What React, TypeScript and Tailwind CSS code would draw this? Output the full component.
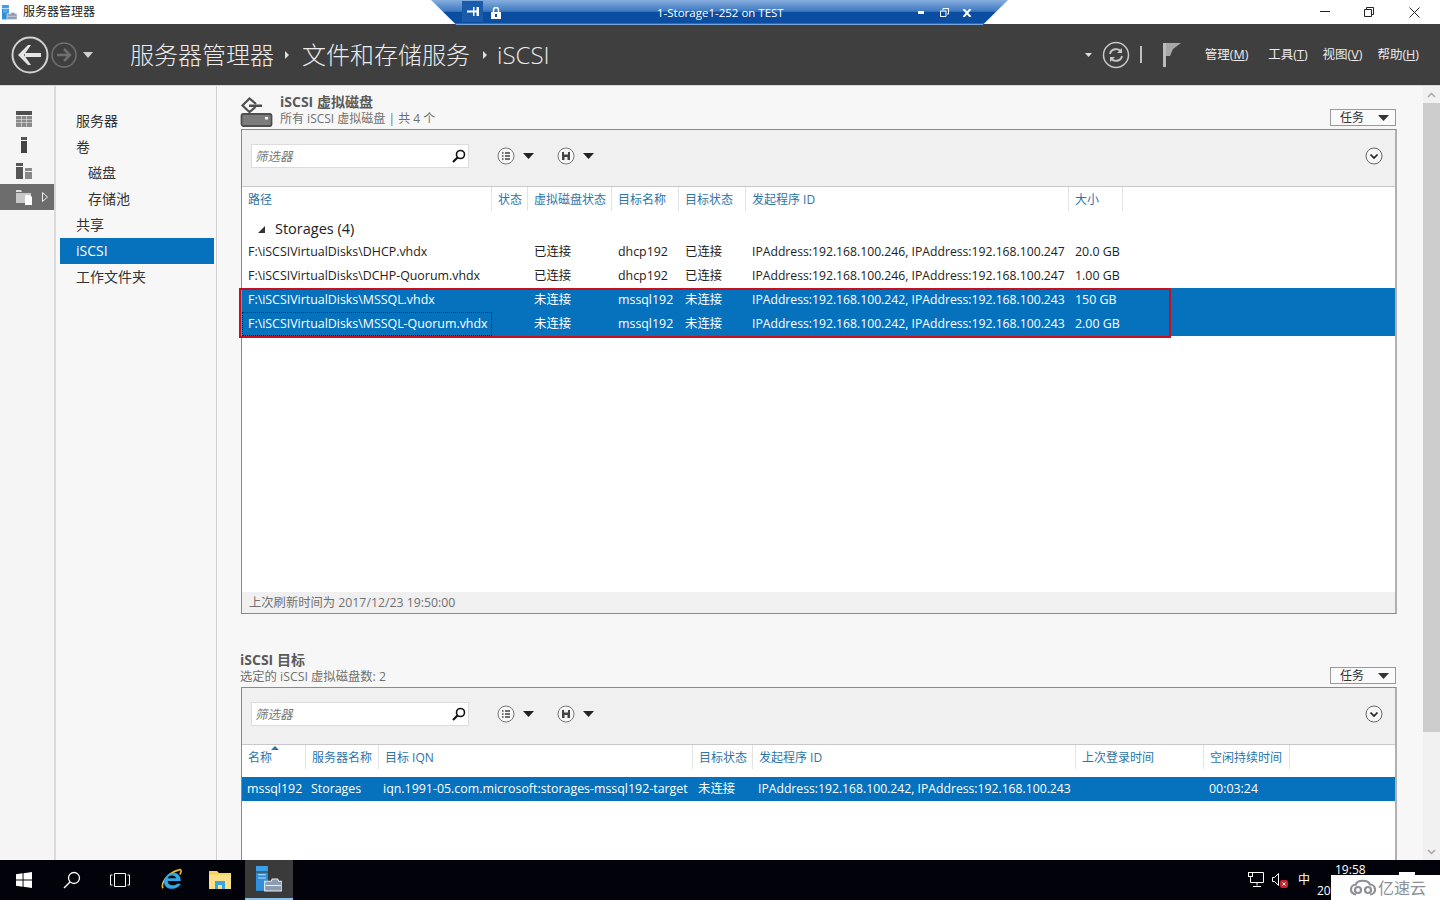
import React from "react";

const Caret = ({ c = "#222", w = 11, h = 6 }: { c?: string; w?: number; h?: number }) => (
  <svg width={w} height={h} viewBox="0 0 10 6" preserveAspectRatio="none"><path d="M0 0h10L5 6z" fill={c} /></svg>
);

const SearchIcon = () => (
  <svg width="16" height="16" viewBox="0 0 16 16" fill="none" stroke="#111">
    <circle cx="9.5" cy="6.5" r="4" strokeWidth="1.6" />
    <path d="M6.5 9.5L2 14" strokeWidth="2.2" />
  </svg>
);

const ListBtn = () => (
  <svg width="18" height="18" viewBox="0 0 18 18" fill="none">
    <circle cx="9" cy="9" r="8" stroke="#777" fill="#f7f7f7" />
    <path d="M5 6h1.5M5 9h1.5M5 12h1.5M8 6h5M8 9h5M8 12h5" stroke="#444" strokeWidth="1.5" />
  </svg>
);

const SaveBtn = () => (
  <svg width="18" height="18" viewBox="0 0 18 18" fill="none">
    <circle cx="9" cy="9" r="8" stroke="#777" fill="#f7f7f7" />
    <path d="M5 5h8v8H5z" fill="#444" />
    <path d="M7 5h4v2.500H7zM7.500 10h3v3h-3z" fill="#f0f0f0" />
  </svg>
);

const ExpandBtn = () => (
  <svg width="18" height="18" viewBox="0 0 18 18" fill="none">
    <circle cx="9" cy="9" r="8" stroke="#666" fill="#f7f7f7" />
    <path d="M5.500 7.500L9 11l3.500-3.500" stroke="#222" strokeWidth="1.700" />
  </svg>
);

function Toolbar() {
  return (
    <div className="h-[57px] bg-[#f0f0f0] border-b border-[#c8c8c8] flex items-center pl-[9px] pr-[12px] pb-[5px] shrink-0">
      <div className="w-[218px] h-[24px] bg-white border border-[#dcdcdc] flex items-center justify-between pl-[3px] pr-[1px]">
        <span className="italic text-[12.500px] leading-[20px] pt-[2px] text-[#777]">筛选器</span>
        <SearchIcon />
      </div>
      <div className="ml-[28px] flex items-center gap-[8px]"><ListBtn /><Caret /></div>
      <div className="ml-[23px] flex items-center gap-[8px]"><SaveBtn /><Caret /></div>
      <div className="ml-auto"><ExpandBtn /></div>
    </div>
  );
}

function TaskBtn() {
  return (
    <div className="w-[66px] h-[17px] mr-[1px] border border-[#999] bg-[#fafafa] flex items-center justify-between pl-[9px] pr-[6px] text-[12px] text-[#333]">
      <span>任务</span>
      <Caret c="#333" />
    </div>
  );
}

type Col = { t: string; w: number; sort?: boolean };

function HeaderRow({ cols, h }: { cols: Col[]; h: number }) {
  return (
    <div className="flex bg-white shrink-0" style={{ height: h }}>
      {cols.map((c) => (
        <div
          key={c.t}
          className="relative border-r border-[#e3e3e3] pl-[6px] text-[12px] text-[#2d74a8] leading-[26px] whitespace-nowrap shrink-0"
          style={{ width: c.w }}
        >
          {c.t}
          {c.sort && (
            <span className="absolute left-[29px] top-[1px] flex rotate-180">
              <Caret c="#2d74a8" w={8} h={4} />
            </span>
          )}
        </div>
      ))}
    </div>
  );
}

function Row({ cells, cols, sel, focus, pad = 6 }: { cells: string[]; cols: number[]; sel?: boolean; focus?: boolean; pad?: number }) {
  return (
    <div className={`flex h-[24px] shrink-0 items-center text-[12.400px] whitespace-nowrap ${sel ? "bg-[#0672bd] text-white" : "bg-white text-[#222]"}`}>
      {cells.map((t, i) => (
        <div
          key={i}
          className={`shrink-0 h-[24px] ${t.startsWith("IPAddress") ? "text-[12.200px]" : ""} ${i === 0 && focus ? "border border-dotted border-[#0b2a44] leading-[21px]" : "leading-[24px]"}`}
          style={{ width: cols[i], paddingLeft: i === 0 && focus ? pad - 1 : pad }}
        >
          {t}
        </div>
      ))}
    </div>
  );
}

const col1: Col[] = [
  { t: "路径", w: 250 },
  { t: "状态", w: 36 },
  { t: "虚拟磁盘状态", w: 84 },
  { t: "目标名称", w: 67 },
  { t: "目标状态", w: 67 },
  { t: "发起程序 ID", w: 323 },
  { t: "大小", w: 54 },
];
const w1 = col1.map((c) => c.w);

const col2: Col[] = [
  { t: "名称", w: 64, sort: true },
  { t: "服务器名称", w: 73 },
  { t: "目标 IQN", w: 314 },
  { t: "目标状态", w: 60 },
  { t: "发起程序 ID", w: 323 },
  { t: "上次登录时间", w: 128 },
  { t: "空闲持续时间", w: 86 },
];
const w2 = [64, 72, 315, 60, 323, 128, 86];

const ipA = "IPAddress:192.168.100.246, IPAddress:192.168.100.247";
const ipB = "IPAddress:192.168.100.242, IPAddress:192.168.100.243";

const DiskIcon = () => (
  <svg className="mt-[3px]" width="33" height="30" viewBox="0 0 33 30" fill="none">
    <path d="M16 7L9.500 1.500 2.500 8.500l7 6.500 6-5" stroke="#4f4f4f" strokeWidth="2.200" />
    <path d="M9 7.500h13V10H9z" fill="#4f4f4f" />
    <rect x="1.500" y="17" width="30" height="12" rx="2" stroke="#4f4f4f" strokeWidth="1.800" fill="#7c7c7c" />
    <rect x="25" y="20" width="3" height="2.500" fill="#f2f2f2" />
  </svg>
);

const RailIcon = ({ k }: { k: number }) => {
  if (k === 0)
    return (
      <svg width="16" height="16" viewBox="0 0 16 16">
        <rect width="16" height="4" fill="#505050" />
        <path d="M0 5h5v3H0zM5.500 5h5v3h-5zM11 5h5v3h-5zM0 8.500h5v3H0zM5.500 8.500h5v3h-5zM11 8.500h5v3h-5zM0 12h5v4H0zM5.500 12h5v4h-5zM11 12h5v4h-5z" fill="#8a8a8a" />
      </svg>
    );
  if (k === 1)
    return (
      <svg width="8" height="16" viewBox="0 0 8 16">
        <rect x="1" width="6" height="3" fill="#555" />
        <rect x="1" y="4" width="6" height="12" fill="#444" />
      </svg>
    );
  if (k === 2)
    return (
      <svg width="16" height="16" viewBox="0 0 16 16">
        <rect width="7" height="3" fill="#555" />
        <rect y="4" width="7" height="12" fill="#555" />
        <path d="M9 5h7v3H9zM9 9h7v7H9z" fill="#888" />
      </svg>
    );
  return (
    <svg width="16" height="16" viewBox="0 0 16 16">
      <path d="M0 1h5l1 2H0z" fill="#ddd" />
      <rect y="4" width="15" height="10" fill="#c8c8c8" />
      <path d="M9 6h5l2 2v8H9z" fill="#fff" />
    </svg>
  );
};

function Nav({ t, sub, sel }: { t: string; sub?: boolean; sel?: boolean }) {
  return (
    <div
      className={`h-[26px] leading-[26px] text-[14px] ${sub ? "pl-[28px]" : "pl-[16px]"} ${sel ? "bg-[#0672bd] text-white" : "text-[#333]"}`}
    >
      {t}
    </div>
  );
}

function Scrollbar() {
  return (
    <div className="w-[17px] bg-[#f1f1f1] flex flex-col items-center shrink-0">
      <div className="h-[17px] shrink-0 flex items-center justify-center">
        <svg width="9" height="6" viewBox="0 0 9 6" fill="none"><path d="M1 5l3.500-3.500L8 5" stroke="#a8a8a8" strokeWidth="1.500" /></svg>
      </div>
      <div className="w-full h-[629px] shrink-0 bg-[#cdcdcd]" />
      <div className="mt-auto h-[17px] shrink-0 flex items-center justify-center">
        <svg width="9" height="6" viewBox="0 0 9 6" fill="none"><path d="M1 1l3.500 3.500L8 1" stroke="#a8a8a8" strokeWidth="1.500" /></svg>
      </div>
    </div>
  );
}

const WinIcon = () => (
  <svg width="16" height="16" viewBox="0 0 17 17" fill="#fff">
    <path d="M0 2.400L7 1.400v6.600H0zM8 1.200L17 0v8H8zM0 9h7v6.600l-7-1zM8 9h9v8l-9-1.200z" />
  </svg>
);

const ServerMgrIcon = ({ s = 24 }: { s?: number }) => (
  <svg width={s} height={s} viewBox="0 0 24 24">
    <rect x="0" y="0" width="11" height="5" fill="#3aa0e8" />
    <rect x="0" y="6" width="11" height="17" fill="#2f8fd8" />
    <path d="M2 8h7M2 11h7" stroke="#bfe3fb" strokeWidth="1" />
    <path d="M8 14h6l1-2h5l1 2h3v9H8z" fill="#8c9ab0" stroke="#e8eef5" strokeWidth="1" />
    <path d="M9 18h14" stroke="#e8eef5" strokeWidth="1" />
  </svg>
);

const IEIcon = () => (
  <svg width="23" height="24" viewBox="0 0 24 26" fill="none">
    <path d="M3 22C0 18 6 6 20 2c3-1 3 2 1 5" stroke="#e8b830" strokeWidth="1.800" />
    <path d="M19 14H8c0 5 7 6 10 3h4c-3 7-17 8-18-1C3 8 13 3 18 6c3 2 4 5 4 8z" fill="#2fa8e6" />
    <path d="M8 11c1-4 8-4 9 0z" fill="#000" />
  </svg>
);

const FolderIcon = () => (
  <svg width="22" height="18" viewBox="0 0 22 18">
    <path d="M0 0h8l2 2h12v16H0z" fill="#f6d365" />
    <path d="M0 4h22v14H0z" fill="#fbe08a" />
    <rect x="6" y="10" width="10" height="8" fill="#3aa6dd" />
    <rect x="9" y="14" width="4" height="4" fill="#fbe08a" />
  </svg>
);

export default function App() {
  return (
    <div className="relative w-[1440px] h-[900px] overflow-hidden flex flex-col bg-white font-['Open_Sans','Noto_Sans_CJK_SC',sans-serif]">
      {/* title bar */}
      <div className="h-[24px] bg-white flex items-center shrink-0 pl-[2px]">
        <ServerMgrIcon s={15} />
        <span className="ml-[6px] text-[12px] text-[#222]">服务器管理器</span>
        <div className="ml-auto flex items-center text-[#222]">
          <svg className="mr-[34px]" width="10" height="2" viewBox="0 0 10 2"><rect width="10" height="1" fill="#222" /></svg>
          <svg className="mr-[35px]" width="10" height="10" viewBox="0 0 10 10" fill="none" stroke="#222"><path d="M2.500 2.500V.5h7v7h-2M.5 2.500h7v7h-7z" /></svg>
          <svg className="mr-[20px]" width="11" height="11" viewBox="0 0 11 11" fill="none" stroke="#222"><path d="M.5.500l10 10M10.500.500l-10 10" /></svg>
        </div>
      </div>

      {/* header */}
      <div className="h-[62px] bg-[#3f3f3f] flex items-center shrink-0 border-b border-[#d8d8d8] text-[#ececec]">
        <svg className="ml-[11px]" width="38" height="38" viewBox="0 0 38 38" fill="none">
          <circle cx="19" cy="19" r="17.500" stroke="#d2d2d2" strokeWidth="2" />
          <path d="M30 19H14" stroke="#e4e4e4" strokeWidth="4" />
          <path d="M17 9L7 19l10 10h3l-7-10 7-10z" fill="#e4e4e4" />
        </svg>
        <svg className="ml-[2px]" width="26" height="26" viewBox="0 0 26 26" fill="none">
          <circle cx="13" cy="13" r="12" stroke="#6f6f6f" strokeWidth="1.600" />
          <path d="M6 13h13M13 7l6 6-6 6" stroke="#6f6f6f" strokeWidth="2.500" />
        </svg>
        <span className="ml-[6px]"><Caret c="#d0d0d0" w={10} h={6} /></span>
        <span className="ml-[37px] text-[24px] leading-none font-light">服务器管理器</span>
        <svg className="ml-[11px]" width="4" height="8" viewBox="0 0 4 8"><path d="M0 0l4 4-4 4z" fill="#ddd" /></svg>
        <span className="ml-[13px] text-[24px] leading-none font-light">文件和存储服务</span>
        <svg className="ml-[13px]" width="4" height="8" viewBox="0 0 4 8"><path d="M0 0l4 4-4 4z" fill="#ddd" /></svg>
        <span className="ml-[10px] text-[24px] leading-none font-light">iSCSI</span>

        <div className="ml-auto flex items-center pr-[21px]">
          <Caret c="#ddd" w={7} h={4} />
          <svg className="ml-[10px]" width="28" height="28" viewBox="0 0 28 28" fill="none">
            <circle cx="14" cy="14" r="12.500" stroke="#c8c8c8" strokeWidth="1.500" />
            <path d="M8 13c1-6 9-6 11-2M20 15c-1 6-9 6-11 2" stroke="#c8c8c8" strokeWidth="1.800" />
            <path d="M20 7v5h-5zM8 21v-5h5z" fill="#c8c8c8" />
          </svg>
          <div className="ml-[10px] w-[2px] h-[17px] bg-[#c0c0c0]" />
          <svg className="ml-[21px]" width="18" height="24" viewBox="0 0 18 24"><path d="M0 0h3v24H0z" fill="#bbb" /><path d="M3 0h15l-8 6-3 7H3z" fill="#a8a8a8" /></svg>
          <span className="ml-[24px] pt-[2px] text-[12.500px]">管理(<u>M</u>)</span>
          <span className="ml-[20px] pt-[2px] text-[12.500px]">工具(<u>T</u>)</span>
          <span className="ml-[15px] pt-[2px] text-[12.500px]">视图(<u>V</u>)</span>
          <span className="ml-[15px] pt-[2px] text-[12.500px]">帮助(<u>H</u>)</span>
        </div>
      </div>

      {/* main */}
      <div className="flex-1 flex min-h-0 bg-[#f7f7f7]">
        {/* rail */}
        <div className="w-[54px] bg-[#f5f5f5] pt-[20px] shrink-0 flex flex-col">
          <div className="h-[26px] pl-[16px] flex items-center"><RailIcon k={0} /></div>
          <div className="h-[26px] pl-[20px] flex items-center"><RailIcon k={1} /></div>
          <div className="h-[26px] pl-[16px] flex items-center"><RailIcon k={2} /></div>
          <div className="h-[26px] pl-[16px] flex items-center bg-[#6d6d6d] gap-[10px]">
            <RailIcon k={3} />
            <svg width="6" height="10" viewBox="0 0 6 10" fill="none"><path d="M.5.500l5 4.500-5 4.500z" stroke="#eee" /></svg>
          </div>
        </div>
        <div className="w-[2px] bg-[#dadada] shrink-0" />
        {/* nav */}
        <div className="w-[161px] bg-[#f7f7f7] border-r border-[#d0d0d0] pt-[22px] pl-[4px] pr-[2px] shrink-0">
          <Nav t="服务器" />
          <Nav t="卷" />
          <Nav t="磁盘" sub />
          <Nav t="存储池" sub />
          <Nav t="共享" />
          <Nav t="iSCSI" sel />
          <Nav t="工作文件夹" />
        </div>

        {/* content */}
        <div className="flex-1 min-w-0 overflow-hidden pl-[23px] pr-[26px] pt-[8px]">
          {/* section 1 */}
          <div className="flex h-[35px]">
            <DiskIcon />
            <div className="ml-[7px] -mt-[1px] flex flex-col">
              <span className="text-[14px] leading-[17px] font-bold text-[#5a5a5a]">iSCSI 虚拟磁盘</span>
              <span className="text-[12px] leading-[17px] text-[#707070]">所有 iSCSI 虚拟磁盘 | 共 4 个</span>
            </div>
            <div className="ml-auto mt-[15px]"><TaskBtn /></div>
          </div>
          <div className="ml-[1px] h-[485px] border border-[#8a8a8a] border-r-2 border-r-[#b0b0b0] flex flex-col bg-white">
            <Toolbar />
            <HeaderRow cols={col1} h={24} />
            <div className="flex items-center h-[29px] shrink-0 pl-[16px] pt-[7px] text-[14.500px] text-[#222]">
              <svg width="7" height="7" viewBox="0 0 7 7"><path d="M7 0v7H0z" fill="#333" /></svg>
              <span className="ml-[10px]">Storages (4)</span>
            </div>
            <Row cols={w1} cells={["F:\\iSCSIVirtualDisks\\DHCP.vhdx", "", "已连接", "dhcp192", "已连接", ipA, "20.0 GB"]} />
            <Row cols={w1} cells={["F:\\iSCSIVirtualDisks\\DCHP-Quorum.vhdx", "", "已连接", "dhcp192", "已连接", ipA, "1.00 GB"]} />
            <Row sel cols={w1} cells={["F:\\iSCSIVirtualDisks\\MSSQL.vhdx", "", "未连接", "mssql192", "未连接", ipB, "150 GB"]} />
            <Row sel focus cols={w1} cells={["F:\\iSCSIVirtualDisks\\MSSQL-Quorum.vhdx", "", "未连接", "mssql192", "未连接", ipB, "2.00 GB"]} />
            <div className="flex-1" />
            <div className="h-[21px] shrink-0 bg-[#f0f0f0] pl-[7px] text-[12.300px] leading-[21px] text-[#707070]">上次刷新时间为 2017/12/23 19:50:00</div>
          </div>

          {/* section 2 */}
          <div className="mt-[38px] flex h-[35px]">
            <div className="-mt-[1px] flex flex-col">
              <span className="text-[14px] leading-[18px] font-bold text-[#5a5a5a]">iSCSI 目标</span>
              <span className="text-[12.300px] leading-[15px] text-[#707070]">选定的 iSCSI 虚拟磁盘数: 2</span>
            </div>
            <div className="ml-auto mt-[15px]"><TaskBtn /></div>
          </div>
          <div className="ml-[1px] h-[200px] border border-[#8a8a8a] border-r-2 border-r-[#b0b0b0] bg-white flex flex-col">
            <Toolbar />
            <HeaderRow cols={col2} h={24} />
            <div className="h-[8px] shrink-0" />
            <Row sel pad={5} cols={w2} cells={["mssql192", "Storages", "iqn.1991-05.com.microsoft:storages-mssql192-target", "未连接", ipB, "", "00:03:24"]} />
          </div>
        </div>
        <Scrollbar />
      </div>

      {/* taskbar */}
      <div className="h-[40px] bg-[#02030a] flex items-center shrink-0 text-white">
        <span className="ml-[16px]"><WinIcon /></span>
        <svg className="ml-[31px]" width="18" height="18" viewBox="0 0 18 18" fill="none" stroke="#fff"><circle cx="11" cy="7" r="5.500" strokeWidth="1.300" /><path d="M7 11l-6 6" strokeWidth="1.500" /></svg>
        <svg className="ml-[29px]" width="20" height="14" viewBox="0 0 20 14" fill="none" stroke="#fff"><path d="M4.500.500h11v13h-11zM2.500 2H.5v10h2M17.500 2h2v10h-2" /></svg>
        <span className="ml-[30px]"><IEIcon /></span>
        <span className="ml-[26px]"><FolderIcon /></span>
        <div className="ml-[14px] w-[48px] h-[40px] bg-[#3a3a3a] border-b-2 border-[#8ec2ec] flex items-center justify-center"><ServerMgrIcon s={26} /></div>
        <div className="ml-auto flex items-center pr-[122px]">
          <svg width="16" height="16" viewBox="0 0 16 16" fill="none" stroke="#fff"><path d="M2.500 5.500V.5h13v10h-13V5.500M9 10.500v3M5 14.500h8" /><rect x=".5" y=".5" width="4" height="4" fill="#000" /></svg>
          <svg className="ml-[8px]" width="16" height="16" viewBox="0 0 16 16" fill="none" stroke="#fff"><path d="M.5 5.500h2l4-4v12l-4-4h-2z" /><rect x="8" y="8" width="8" height="8" rx="2" fill="#c8202f" stroke="none" /><path d="M10.500 10.500l3 3M13.500 10.500l-3 3" /></svg>
          <span className="ml-[10px] text-[12px] w-[20px]">中</span>
        </div>
      </div>

      {/* clock */}
      <span className="absolute left-[1335px] top-[865px] h-[10px] text-[12px] leading-[10px] text-white">19:58</span>
      <span className="absolute left-[1317px] top-[882px] text-[12px] text-white">20</span>

      {/* remote desktop bar */}
      <div className="absolute left-[431px] top-0 w-[577px] h-[25px] [clip-path:polygon(0_0,100%_0,95.600%_100%,4.400%_100%)] bg-[linear-gradient(#86aede_0%,#3f78c0_45%,#0b4da0_50%,#0b4da0_92%,#9cc0e8_100%)] flex items-center text-white">
        <div className="ml-[31px] -mt-[3px] w-[21px] h-[21px] bg-[#1a5cab] flex items-center justify-center">
          <svg width="12" height="9" viewBox="0 0 12 9" fill="#fff"><path d="M0 3.500h6V0h1.500v3.500h2V0H12v9H9.500V5.500h-2V9H6V5.500H0z" /></svg>
        </div>
        <svg className="ml-[8px]" width="10" height="12" viewBox="0 0 10 12"><path d="M2.500 5V3a2.500 2.500 0 015 0v2" fill="none" stroke="#fff" strokeWidth="1.500" /><path d="M0 5h10v7H0z" fill="#fff" /><rect x="4" y="7" width="2" height="3" fill="#0b4da0" /></svg>
        <span className="ml-[156px] text-[11.500px]">1-Storage1-252 on TEST</span>
        <div className="ml-auto flex items-center mr-[36px]">
          <svg width="6" height="3" viewBox="0 0 6 3"><rect width="6" height="3" fill="#fff" /></svg>
          <svg className="ml-[16px]" width="9" height="9" viewBox="0 0 9 9" fill="none" stroke="#fff"><path d="M3 2V.5h5.500V6H7M.5 3h5.500v5.500H.5z" /></svg>
          <svg className="ml-[13px]" width="10" height="8" viewBox="0 0 9 8" fill="none" stroke="#fff" strokeWidth="2"><path d="M1 0l7 8M8 0L1 8" /></svg>
        </div>
      </div>

      {/* red annotation */}
      <div className="absolute left-[239px] top-[288px] w-[932px] h-[50px] border-2 border-[#c8101c] pointer-events-none" />

      {/* watermark */}
      <div className="absolute left-[1331px] top-[875px] w-[109px] h-[25px] bg-white flex items-center pl-[19px]">
        <svg width="26" height="17" viewBox="0 0 26 16" fill="none" stroke="#8b8f96" strokeWidth="2.200">
          <path d="M6 15a5 5 0 010-10c1-5 12-5 14 0a5 5 0 010 10" />
          <circle cx="8" cy="10.500" r="3" />
          <circle cx="18" cy="10.500" r="3" />
        </svg>
        <span className="ml-[2px] text-[16px] leading-none text-[#8b8f96]">亿速云</span>
      </div>
      <div className="absolute left-[1399px] top-[872px] w-[16px] h-[3px] bg-white" />
    </div>
  );
}
